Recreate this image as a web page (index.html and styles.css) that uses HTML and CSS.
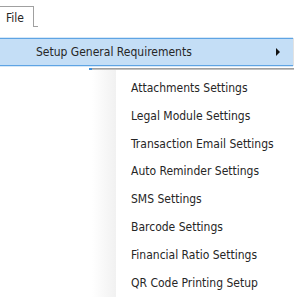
FILE: index.html
```html
<!DOCTYPE html>
<html lang="en">
<head>
  <meta charset="UTF-8">
  <title>File Menu</title>
  <link rel="stylesheet" href="styles.css">
</head>
<body>
  <div class="screen">
    <div class="tab-strip">
      <div class="tab">File</div>
      <div class="tab-foot"></div>
    </div>
    <div class="menu">
      <div class="menu-item hot">
        <span>Setup General Requirements</span>
        <span class="arrow"></span>
      </div>
    </div>
    <div class="sub-edge">
      <span class="sub-edge-mark"></span>
    </div>
    <div class="sub-wrap">
      <div class="sub-shadow"></div>
      <ul class="submenu">
        <li>Attachments Settings</li>
        <li>Legal Module Settings</li>
        <li>Transaction Email Settings</li>
        <li>Auto Reminder Settings</li>
        <li>SMS Settings</li>
        <li>Barcode Settings</li>
        <li>Financial Ratio Settings</li>
        <li>QR Code Printing Setup</li>
      </ul>
    </div>
  </div>
</body>
</html>
```

FILE: styles.css
```css
:root {
  --text-color: #262626;
  --hot-fill: #c4def6;
  --hot-line: #5ea4e4;
  --line-gray: #a0a0a0;
}

body {
  margin: 0;
  background-color: #ffffff;
  color: var(--text-color);
  font-family: 'DejaVu Sans Condensed', 'DejaVu Sans', sans-serif;
  font-size: 12px;
}

.screen {
  width: 300px;
  height: 300px;
  overflow: hidden;
}

/* tab at the top */
.tab-strip {
  display: flex;
  align-items: flex-end;
  padding-top: 5px;
  height: 22px;
}

.tab {
  width: 34px;
  height: 21px;
  box-sizing: border-box;
  border-top: 1px solid var(--line-gray);
  border-right: 1px solid var(--line-gray);
  padding-left: 6px;
  line-height: 22px;
}

.tab-foot {
  width: 4px;
  border-bottom: 1px solid var(--line-gray);
}

/* highlighted menu row */
.menu {
  margin-top: 11px;
  width: 293px;
  border-right: 1px solid #e2e2e2;
}

.menu-item {
  display: flex;
  align-items: center;
  justify-content: space-between;
  height: 26px;
  padding: 0 13px 0 36px;
}

.menu-item.hot {
  background-color: var(--hot-fill);
  border-top: 1px solid var(--hot-line);
  border-bottom: 1px solid var(--hot-line);
  box-shadow: 0 -1px 0 #d6e8f8, 0 1px 0 #d6e8f8;
}

.arrow {
  width: 0;
  height: 0;
  border-top: 4px solid transparent;
  border-bottom: 4px solid transparent;
  border-left: 4px solid #111111;
}

/* line under the row */
.sub-edge {
  display: flex;
  margin: 2px 0 0 89px;
  width: 205px;
  height: 2px;
  background: linear-gradient(#8f8f8f, #cfcfcf);
}

.sub-edge-mark {
  width: 3px;
  height: 2px;
  background-color: #3c8fdc;
}

/* submenu with soft shadow */
.sub-wrap {
  display: flex;
  margin-left: 92px;
}

.sub-shadow {
  width: 24px;
  background: linear-gradient(to right, #ffffff, #f1f1f1);
}

.submenu {
  list-style: none;
  margin: 0;
  padding: 5px 0 0 15px;
  flex: 1;
  background-color: #ffffff;
}

.submenu li {
  height: 27.8px;
  line-height: 27.8px;
  white-space: nowrap;
}
```
